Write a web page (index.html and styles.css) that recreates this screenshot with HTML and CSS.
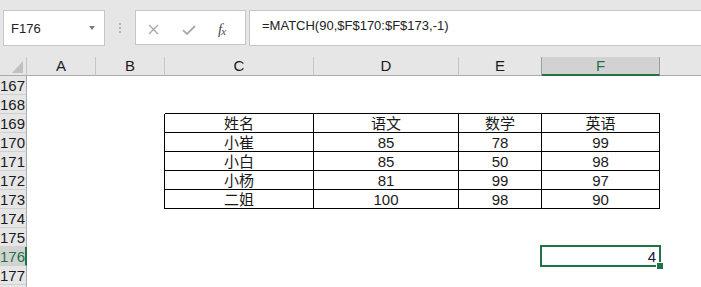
FILE: index.html
```html
<!DOCTYPE html>
<html>
  <head>
    <meta charset="UTF-8">
    <title>MATCH</title>
    <link rel="stylesheet" href="styles.css">
  </head>
  <body>
    <div class="toolbar">
      <div class="namebox">
        <span>F176</span>
        <span class="caret"></span>
      </div>
      <div class="grip"><i></i><i></i><i></i></div>
      <div class="fxbox">
        <svg class="ico-x" width="11" height="11" viewBox="0 0 11 11"><path d="M1 1L10 10M10 1L1 10" stroke="#a9a9a9" stroke-width="1.4" fill="none"/></svg>
        <svg class="ico-ok" width="14" height="10" viewBox="0 0 14 10"><path d="M1 5.2L5 9L13 1" stroke="#a9a9a9" stroke-width="1.8" fill="none"/></svg>
        <span class="fx">f<sub>x</sub></span>
      </div>
      <div class="formula">=MATCH(90,$F$170:$F$173,-1)</div>
    </div>

    <div class="sheet">
      <div class="row head">
        <div class="rh corner"><svg width="11" height="12" viewBox="0 0 11 12"><path d="M11 0V12H0Z" fill="#c1c1c1"/></svg></div>
        <div class="ch ca">A</div>
        <div class="ch cb">B</div>
        <div class="ch cc">C</div>
        <div class="ch cd">D</div>
        <div class="ch ce">E</div>
        <div class="ch cf on">F</div>
        <div class="ch cg"></div>
      </div>

      <div class="row">
        <div class="rh">167</div>
        <div class="c ca"></div><div class="c cb"></div><div class="c cc"></div><div class="c cd"></div><div class="c ce"></div><div class="c cf"></div><div class="c cg"></div>
      </div>
      <div class="row">
        <div class="rh">168</div>
        <div class="c ca"></div><div class="c cb"></div>
        <div class="c cc bt"></div><div class="c cd bt"></div><div class="c ce bt"></div><div class="c cf bt"></div>
        <div class="c cg"></div>
      </div>
      <div class="row">
        <div class="rh">169</div>
        <div class="c ca"></div><div class="c cb bl"></div>
        <div class="c cc t">姓名</div><div class="c cd t">语文</div><div class="c ce t">数学</div><div class="c cf t">英语</div>
        <div class="c cg"></div>
      </div>
      <div class="row">
        <div class="rh">170</div>
        <div class="c ca"></div><div class="c cb bl"></div>
        <div class="c cc t">小崔</div><div class="c cd t">85</div><div class="c ce t">78</div><div class="c cf t">99</div>
        <div class="c cg"></div>
      </div>
      <div class="row">
        <div class="rh">171</div>
        <div class="c ca"></div><div class="c cb bl"></div>
        <div class="c cc t">小白</div><div class="c cd t">85</div><div class="c ce t">50</div><div class="c cf t">98</div>
        <div class="c cg"></div>
      </div>
      <div class="row">
        <div class="rh">172</div>
        <div class="c ca"></div><div class="c cb bl"></div>
        <div class="c cc t">小杨</div><div class="c cd t">81</div><div class="c ce t">99</div><div class="c cf t">97</div>
        <div class="c cg"></div>
      </div>
      <div class="row">
        <div class="rh">173</div>
        <div class="c ca"></div><div class="c cb bl"></div>
        <div class="c cc t">二姐</div><div class="c cd t">100</div><div class="c ce t">98</div><div class="c cf t">90</div>
        <div class="c cg"></div>
      </div>
      <div class="row">
        <div class="rh">174</div>
        <div class="c ca"></div><div class="c cb"></div><div class="c cc"></div><div class="c cd"></div><div class="c ce"></div><div class="c cf"></div><div class="c cg"></div>
      </div>
      <div class="row">
        <div class="rh">175</div>
        <div class="c ca"></div><div class="c cb"></div><div class="c cc"></div><div class="c cd"></div><div class="c ce"></div><div class="c cf"></div><div class="c cg"></div>
      </div>
      <div class="row">
        <div class="rh on">176</div>
        <div class="c ca"></div><div class="c cb"></div><div class="c cc"></div><div class="c cd"></div><div class="c ce"></div>
        <div class="c cf num sel">4<span class="handle"></span></div>
        <div class="c cg"></div>
      </div>
      <div class="row">
        <div class="rh">177</div>
        <div class="c ca"></div><div class="c cb"></div><div class="c cc"></div><div class="c cd"></div><div class="c ce"></div><div class="c cf"></div><div class="c cg"></div>
      </div>
      <div class="row">
        <div class="rh"></div>
        <div class="c ca"></div><div class="c cb"></div><div class="c cc"></div><div class="c cd"></div><div class="c ce"></div><div class="c cf"></div><div class="c cg"></div>
      </div>
    </div>
  </body>
</html>
```

FILE: styles.css
```css
* {
	box-sizing: border-box;
}

body {
	margin: 0;
	padding: 0;
	width: 701px;
	height: 287px;
	overflow: hidden;
	background-color: #fff;
	font-family: "Liberation Sans", "Noto Sans CJK SC", sans-serif;
	color: #1a1a1a;
}

/* formula bar */
.toolbar {
	display: flex;
	height: 57px;
	padding-top: 10px;
	background-color: #e6e6e6;
}

.namebox {
	display: flex;
	align-items: center;
	justify-content: space-between;
	width: 102px;
	height: 36px;
	margin-left: 3px;
	padding: 0 9px 0 7px;
	background-color: #fff;
	border: 1px solid #c6c6c6;
	font-size: 13px;
	color: #222;
}

.caret {
	width: 0;
	height: 0;
	border-left: 3.5px solid transparent;
	border-right: 3.5px solid transparent;
	border-top: 4px solid #7a7a7a;
}

.grip {
	display: flex;
	flex-direction: column;
	gap: 2px;
	width: 2px;
	margin: 13px 14px 0 14px;
}

.grip i {
	display: block;
	width: 2px;
	height: 2px;
	background-color: #b3b3b3;
}

.fxbox {
	display: flex;
	align-items: center;
	width: 111px;
	height: 35px;
	padding-left: 12px;
	padding-top: 3px;
	background-color: #fff;
	border: 1px solid #c6c6c6;
}

.ico-ok {
	margin-left: 23px;
	margin-top: 2px;
}

.fx {
	margin-left: 22px;
	font-family: "Liberation Serif", serif;
	font-style: italic;
	font-size: 15px;
	color: #4a4a4a;
	letter-spacing: -1px;
}

.fx sub {
	font-size: 11px;
	vertical-align: -1px;
}

.formula {
	flex: 1;
	height: 36px;
	margin-left: 3px;
	margin-right: -2px;
	padding: 7px 0 0 12px;
	background-color: #fff;
	border: 1px solid #c6c6c6;
	font-size: 13px;
	color: #222;
}

/* grid */
.row {
	display: flex;
	height: 19px;
}

.rh {
	width: 27px;
	height: 19px;
	padding-right: 2px;
	background-color: #e6e6e6;
	border-right: 1px solid #ababab;
	border-bottom: 1px solid #d0d0d0;
	text-align: right;
	font-size: 15px;
	line-height: 19px;
}

.rh.on {
	background-color: #d2d2d2;
	color: #217346;
	border-right: 2px solid #217346;
	padding-right: 1px;
}

.head .rh,
.ch {
	height: 19px;
	border-bottom: 1px solid #ababab;
}

.corner {
	display: flex;
	align-items: flex-end;
	justify-content: flex-end;
	padding: 0 3px 2px 0;
	border-right-color: #c6c6c6;
}

.ch {
	background-color: #e6e6e6;
	border-right: 1px solid #c6c6c6;
	text-align: center;
	font-size: 15px;
	line-height: 18px;
}

.ch.on {
	background-color: #d2d2d2;
	color: #217346;
	border-bottom: 2px solid #217346;
	border-right-color: #9e9e9e;
	box-shadow: -1px 0 0 #9e9e9e;
}

.ch.cg {
	border-right: none;
}

.ca { width: 69px; }
.cb { width: 69px; }
.cc { width: 149px; }
.cd { width: 145px; }
.ce { width: 83px; }
.cf { width: 118px; }
.cg { flex: 1; }

.c {
	position: relative;
	display: flex;
	align-items: flex-end;
	justify-content: center;
	padding-bottom: 2px;
	font-size: 15px;
	line-height: 15px;
}

.c.t {
	border-right: 1px solid #000;
	border-bottom: 1px solid #000;
	padding-bottom: 1px;
}

.c.bt {
	border-bottom: 1px solid #000;
}

.c.bl {
	border-right: 1px solid #000;
}

.c.num {
	justify-content: flex-end;
	padding-right: 4px;
	color: #1e1236;
}

.sel::before {
	content: "";
	position: absolute;
	left: -2px;
	top: -2px;
	right: -1px;
	bottom: -1px;
	border: 2px solid #217346;
}

.handle {
	position: absolute;
	right: -3px;
	bottom: -3px;
	width: 6px;
	height: 6px;
	background-color: #217346;
	box-shadow: 0 0 0 1px #fff;
}
```
